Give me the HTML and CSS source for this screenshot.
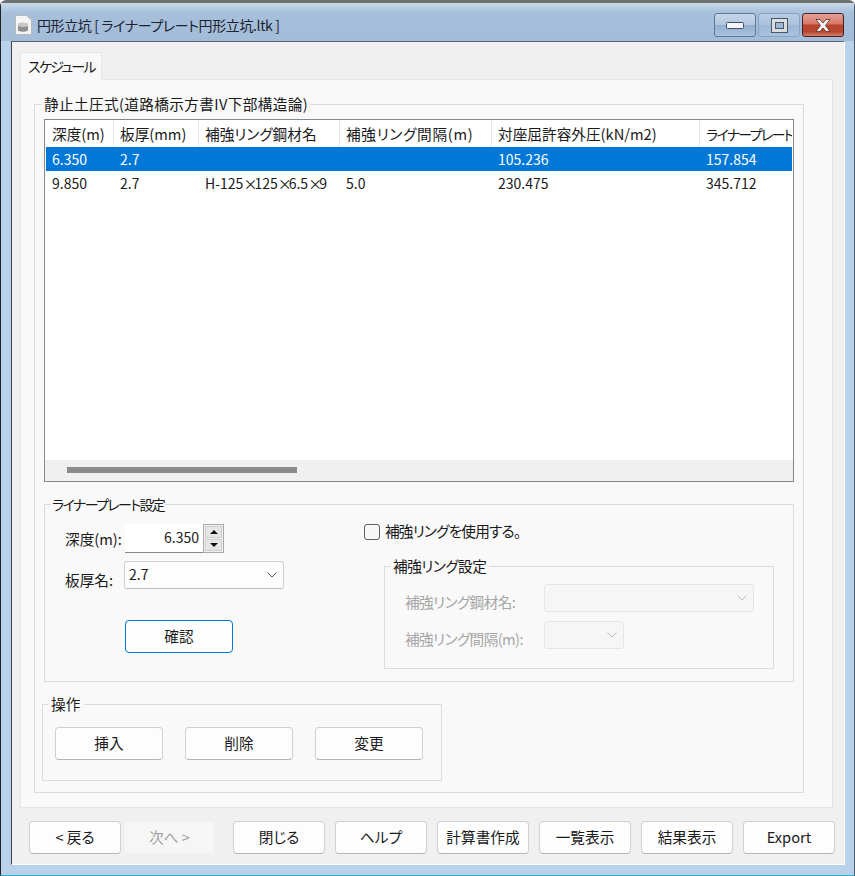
FILE: index.html
```html
<!DOCTYPE html>
<html lang="ja">
<head>
<meta charset="utf-8">
<title>円形立坑</title>
<link rel="stylesheet" href="styles.css">
</head>
<body>
<div class="window">
  <header class="titlebar">
    <svg class="app-icon" width="18" height="20" viewBox="0 0 18 20">
      <path d="M1.5 .5H12.500L17.500 5V19.500H1.500Z" fill="#f4f4f4" stroke="#b9b9b9"/>
      <path d="M4 9Q9 6.500 14 9V15.500Q9 18 4 15.500Z" fill="#8e8e8e"/>
      <path d="M4 9Q9 6.500 14 9V11Q9 13 4 11Z" fill="#c8c8c8"/>
    </svg>
    <span class="title">円形立坑 [ ライナープレート円形立坑.ltk ]</span>
    <div class="controls">
      <div class="ctl">
        <svg width="18" height="7" viewBox="0 0 18 7"><rect x=".5" y=".5" width="17" height="6" rx="1" fill="#f5f5f5" stroke="#3c4f68"/></svg>
      </div>
      <div class="ctl ctl-max">
        <svg width="17" height="15" viewBox="0 0 17 15"><rect x=".5" y=".5" width="16" height="14" fill="#dcdcdc" stroke="#47566b"/><rect x="4.500" y="4.500" width="8" height="6" fill="#9db8d6" stroke="#47566b"/></svg>
      </div>
      <div class="ctl ctl-close">
        <svg width="18" height="15" viewBox="0 0 18 15"><path d="M2 1.500H6L9 5L12 1.500H16L11.500 7.500L16 13.500H12L9 10L6 13.500H2L6.500 7.500Z" fill="#f1f1f1" stroke="#5b2a22" stroke-width=".8"/></svg>
      </div>
    </div>
  </header>

  <main class="client">
    <div class="tabs"><div class="tab">スケジュール</div></div>
    <section class="panel">
      <fieldset class="group group-main">
        <legend>静止土圧式(道路橋示方書IV下部構造論)</legend>

        <div class="table">
          <div class="grid head">
            <div>深度(m)</div><div>板厚(mm)</div><div>補強リング鋼材名</div><div>補強リング間隔(m)</div><div>対座屈許容外圧(kN/m2)</div><div>ライナープレート(</div>
          </div>
          <div class="grid row selected">
            <div>6.350</div><div>2.7</div><div></div><div></div><div>105.236</div><div>157.854</div>
          </div>
          <div class="grid row">
            <div>9.850</div><div>2.7</div><div>H-125<span class="mul">×</span>125<span class="mul">×</span>6.5<span class="mul">×</span>9</div><div>5.0</div><div>230.475</div><div>345.712</div>
          </div>
          <div class="hscroll"><div class="thumb"></div></div>
        </div>

        <fieldset class="group group-liner">
          <legend>ライナープレート設定</legend>
          <div class="liner-body">
            <div class="liner-left">
              <div class="field field-depth">
                <label class="lbl-depth">深度(m):</label>
                <div class="num">6.350</div>
                <div class="spin">
                  <div class="spin-btn"><svg width="8" height="4" viewBox="0 0 8 4"><path d="M4 0L8 4H0Z" fill="#111"/></svg></div>
                  <div class="spin-btn"><svg width="8" height="4" viewBox="0 0 8 4"><path d="M0 0H8L4 4Z" fill="#111"/></svg></div>
                </div>
              </div>
              <div class="field field-thick">
                <label class="lbl-thick">板厚名:</label>
                <div class="combo combo-thick"><span>2.7</span>
                  <svg class="chev" width="10" height="6" viewBox="0 0 10 6"><path d="M.5 .5L5 5L9.500 .5" fill="none" stroke="#555"/></svg>
                </div>
              </div>
              <button class="btn btn-primary">確認</button>
            </div>
            <div class="liner-right">
              <div class="check"><span class="box"></span><span class="check-text">補強リングを使用する。</span></div>
              <fieldset class="group group-ring">
                <legend>補強リング設定</legend>
                <div class="ring-field ring-first">
                  <label>補強リング鋼材名:</label>
                  <div class="combo combo-off combo-steel"><svg class="chev" width="10" height="6" viewBox="0 0 10 6"><path d="M.5 .5L5 5L9.500 .5" fill="none" stroke="#bdbdbd"/></svg></div>
                </div>
                <div class="ring-field">
                  <label>補強リング間隔(m):</label>
                  <div class="combo combo-off combo-gap"><svg class="chev" width="10" height="6" viewBox="0 0 10 6"><path d="M.5 .5L5 5L9.500 .5" fill="none" stroke="#bdbdbd"/></svg></div>
                </div>
              </fieldset>
            </div>
          </div>
        </fieldset>

        <fieldset class="group group-ops">
          <legend>操作</legend>
          <div class="ops">
            <button class="btn btn-op">挿入</button>
            <button class="btn btn-op">削除</button>
            <button class="btn btn-op">変更</button>
          </div>
        </fieldset>
      </fieldset>
    </section>

    <footer class="actions">
      <button class="btn btn-nav">&lt; 戻る</button>
      <button class="btn btn-nav btn-off">次へ &gt;</button>
      <button class="btn btn-nav btn-close">閉じる</button>
      <button class="btn btn-nav">ヘルプ</button>
      <button class="btn btn-nav">計算書作成</button>
      <button class="btn btn-nav">一覧表示</button>
      <button class="btn btn-nav">結果表示</button>
      <button class="btn btn-nav">Export</button>
    </footer>
  </main>
</div>
</body>
</html>
```

FILE: styles.css
```css
* { box-sizing: border-box; }
html, body { margin: 0; padding: 0; }
body {
  width: 855px;
  height: 876px;
  overflow: hidden;
  font-family: "Noto Sans CJK JP", "Noto Sans", sans-serif;
  font-size: 14.67px;
  line-height: 20px;
  color: #1a1a1a;
  font-feature-settings: "palt";
}
.window {
  width: 855px;
  height: 876px;
  display: flex;
  flex-direction: column;
  padding: 0 2px 2px 1px;
  background: #b9d1ea;
  border-top: 3px solid #6e7072;
  border-left: 1px solid #222;
  border-right: 1px solid #4a5a6a;
  border-bottom: 1px solid #1fb5c9;
  border-top-left-radius: 6px;
  border-top-right-radius: 6px;
}
.titlebar {
  height: 38px;
  flex: none;
  display: flex;
  align-items: flex-start;
  padding: 12px 0 0 13px;
  background: linear-gradient(180deg, #c9d9ea 0, #a6bfdb 10px, #a3bcd8 100%);
  margin: 0 -2px 0 -1px;
}
.app-icon { flex: none; }
.title { margin: 0 0 0 5px; color: #1b2230; font-size: 14px; letter-spacing: -.38px; }
.controls {
  margin-left: auto;
  margin-right: 10px;
  margin-top: -2px;
  display: flex;
  gap: 2px;
}
.ctl {
  width: 42px;
  height: 24px;
  display: flex;
  align-items: center;
  justify-content: center;
  border: 1px solid #5f7896;
  border-radius: 3px;
  background: linear-gradient(180deg, #c5d6e9 0, #b2c8e0 50%, #93b0d0 52%, #a9c2dd 100%);
}
.ctl-max { background: linear-gradient(180deg, #b7cce3 0, #a9c2dd 50%, #9db8d6 52%, #a9c2dd 100%); border-color: #8ba3c0; }
.ctl-close {
  border-color: #4a1f1f;
  background: linear-gradient(180deg, #e4a195 0, #d4786a 45%, #b9442c 50%, #b8462f 80%, #cf7d6c 100%);
}
.client {
  flex: 1;
  margin: 0 7px 8px 9px;
  padding: 10px 11px 0 8px;
  background: #f0f0f0;
  border-top: 1px solid #5a6470;
  border-left: 1px solid #39424d;
  border-right: 1px solid #fff;
  border-bottom: 1px solid #fff;
  display: flex;
  flex-direction: column;
}
.tabs { display: flex; height: 28px; flex: none; position: relative; z-index: 1; }
.tab {
  width: 82px;
  height: 28px;
  padding: 3px 0 0 7px;
  white-space: nowrap;
  font-size: 14px;
  letter-spacing: -1.7px;
  background: #f9f9f9;
  border: 1px solid #e5e5e5;
  border-bottom: 0;
}
.panel {
  height: 729px;
  flex: none;
  margin-top: -1px;
  background: #f9f9f9;
  border: 1px solid #e5e5e5;
  padding: 14px 0 0 13px;
}
fieldset.group {
  margin: 0;
  min-width: 0;
  border: 1px solid #dcdcdc;
}
legend { padding: 0 1px; line-height: 20px; white-space: nowrap; }
.group-main {
  width: 770px;
  height: 699px;
  padding: 5px 9px 0 7px;
}
.group-main > legend { margin-left: 0; padding: 0 2px; letter-spacing: .35px; }
.table {
  width: 750px;
  height: 363px;
  margin-left: 2px;
  padding: 0 1px;
  display: flex;
  flex-direction: column;
  background: #fff;
  border: 1px solid #828790;
  overflow: hidden;
}
.grid {
  display: grid;
  grid-template-columns: 68px 85px 141px 152px 208px 92px;
  flex: none;
  white-space: nowrap;
}
.grid > div { overflow: hidden; padding-left: 6px; }
.head { height: 27px; }
.head > div { border-right: 1px solid #e5e5e5; line-height: 28px; }
.head > div:nth-child(4) { letter-spacing: .7px; }
.head > div:last-child { border-right: 0; font-size: 14px; letter-spacing: -1.7px; }
.row { height: 24px; line-height: 25px; font-size: 14px; }
.mul { letter-spacing: -3px; margin-right: 0; }
.selected { background: #0078d7; color: #fff; }
.hscroll {
  margin: auto -1px 0;
  height: 21px;
  flex: none;
  background: #f0f0f0;
  padding: 7px 0 0 22px;
}
.thumb { width: 230px; height: 6px; background: #8a8a8a; }

.group-liner {
  width: 750px;
  height: 188px;
  margin: 12px 0 0 2px !important;
  padding: 10px 19px 0 20px;
}
.group-liner > legend { margin-left: -14px; padding: 0 1px; font-size: 14px; letter-spacing: -1.6px; }
.liner-body { display: flex; }
.liner-left { width: 299px; flex: none; }
.field { display: flex; }
.field-depth { height: 29px; }
.lbl-depth { width: 60px; padding-top: 5px; }
.num {
  width: 78px;
  height: 29px;
  padding: 3px 4px 0 0;
  font-size: 14px;
  text-align: right;
  background: #fff;
  border-bottom: 1px solid #8a8a8a;
}
.spin {
  width: 21px;
  height: 29px;
  border: 1px solid #a9a9a9;
  background: #f0f0f0;
  padding: 1px;
  display: flex;
  flex-direction: column;
  gap: 1px;
}
.spin-btn {
  flex: 1;
  background: #e6e6e6;
  border: 1px solid #cfcfcf;
  display: flex;
  align-items: center;
  justify-content: center;
}
.field-thick { margin-top: 8px; height: 28px; }
.lbl-thick { width: 59px; padding-top: 9px; }
.combo {
  height: 28px;
  font-size: 14px;
  background: #fdfdfd;
  border: 1px solid #d0d0d0;
  border-bottom-color: #bdbdbd;
  border-radius: 3px;
  display: flex;
  align-items: center;
  justify-content: space-between;
  padding: 0 6px 2px 4px;
}
.combo-thick { width: 160px; }
.chev { margin-left: auto; margin-top: 2px; }
.btn {
  font: inherit;
  font-feature-settings: inherit;
  color: #1a1a1a;
  background: #fdfdfd;
  border: 1px solid #d0d0d0;
  border-bottom-color: #b5b5b5;
  border-radius: 4px;
  padding: 0 0 1px;
  height: 33px;
  display: block;
}
.btn-primary {
  width: 108px;
  margin: 31px 0 0 60px;
  border: 1px solid #0078d4;
}

.liner-right { flex: none; width: 410px; }
.check { display: flex; align-items: center; height: 16px; gap: 5px; }
.check-text { letter-spacing: -.8px; margin-top: -3px; }
.box {
  width: 16px;
  height: 16px;
  background: #f7f7f7;
  border: 1px solid #5f5f5f;
  border-radius: 3px;
}
.group-ring {
  width: 390px;
  height: 113px;
  margin: 16px 0 0 20px !important;
  padding: 8px 19px 0 20px;
}
.group-ring > legend { margin-left: -15px; padding: 0 3px; letter-spacing: -.5px; }
.ring-field { display: flex; height: 28px; color: #a6a6a6; }
.ring-field + .ring-field { margin-top: 9px; }
.ring-field label { width: 139px; padding-top: 8px; white-space: nowrap; letter-spacing: -.6px; }
.combo-off { background: #f6f6f6; border-color: #e6e6e6; }
.combo-steel { width: 210px; }
.combo-gap { width: 80px; }

.group-ops {
  width: 400px;
  height: 87px;
  margin: 12px 0 0 0 !important;
  padding: 13px 0 0 12px;
}
.group-ops > legend { margin-left: -7px; padding: 0 4px 0 3px; }
.ops { display: flex; gap: 22px; }
.btn-op { width: 108px; }

.actions {
  display: flex;
  margin-top: 13px;
  padding-left: 9px;
  gap: 10px;
}
.btn-nav { width: 92px; flex: none; font-size: 14.67px; }
.btn-nav.btn-off {
  width: 91px;
  margin-left: -7px;
  background: #f6f6f6;
  border-color: #f0f0f0;
  color: #a0a0a0;
}
.btn-close { margin-left: 8px; }
```
